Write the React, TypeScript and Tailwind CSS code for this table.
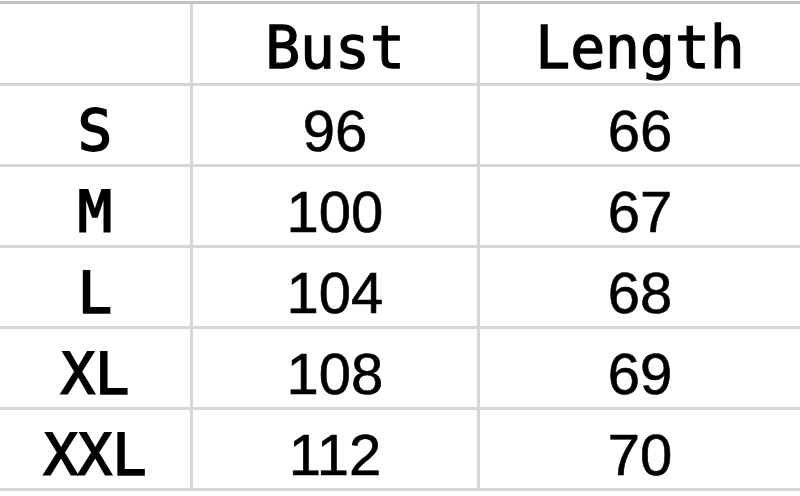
import React from "react";

const rows: [string, string, string][] = [
  ["S", "96", "66"],
  ["M", "100", "67"],
  ["L", "104", "68"],
  ["XL", "108", "69"],
  ["XXL", "112", "70"],
];

const sans = { fontFamily: '"Liberation Sans", Arial, sans-serif' };
const mono = { fontFamily: '"DejaVu Sans Mono", monospace' };

export default function App() {
  return (
    <div className="w-[800px] h-[496px] bg-white overflow-hidden pt-[1px] text-black">
      <div className="border-t-[3px] border-[#c4c4c4]">
        <div className="grid grid-cols-[193px_287px_1fr] h-[82px] border-b-[3px] border-[#d6d6d6]">
          <div className="border-r-[3px] border-[#d6d6d6]" />
          <div
            className="border-r-[3px] border-[#d6d6d6] flex items-center justify-center pt-[8px] text-[58px] leading-none [-webkit-text-stroke:1.3px_black]"
            style={mono}
          >
            Bust
          </div>
          <div
            className="flex items-center justify-center pt-[8px] text-[58px] leading-none [-webkit-text-stroke:1.3px_black]"
            style={mono}
          >
            Length
          </div>
        </div>
        {rows.map(([s, b, l]) => (
          <div
            key={s}
            className="grid grid-cols-[193px_287px_1fr] h-[81px] border-b-[3px] border-[#d6d6d6]"
          >
            <div
              className="border-r-[3px] border-[#d6d6d6] flex items-center justify-center pt-[12px] text-[57px] leading-none [-webkit-text-stroke:1.8px_black]"
              style={mono}
            >
              {s}
            </div>
            <div
              className="border-r-[3px] border-[#d6d6d6] flex items-center justify-center pt-[12px] text-[58px] leading-none [-webkit-text-stroke:0.6px_black]"
              style={sans}
            >
              {b}
            </div>
            <div
              className="flex items-center justify-center pt-[12px] text-[58px] leading-none [-webkit-text-stroke:0.6px_black]"
              style={sans}
            >
              {l}
            </div>
          </div>
        ))}
      </div>
    </div>
  );
}
